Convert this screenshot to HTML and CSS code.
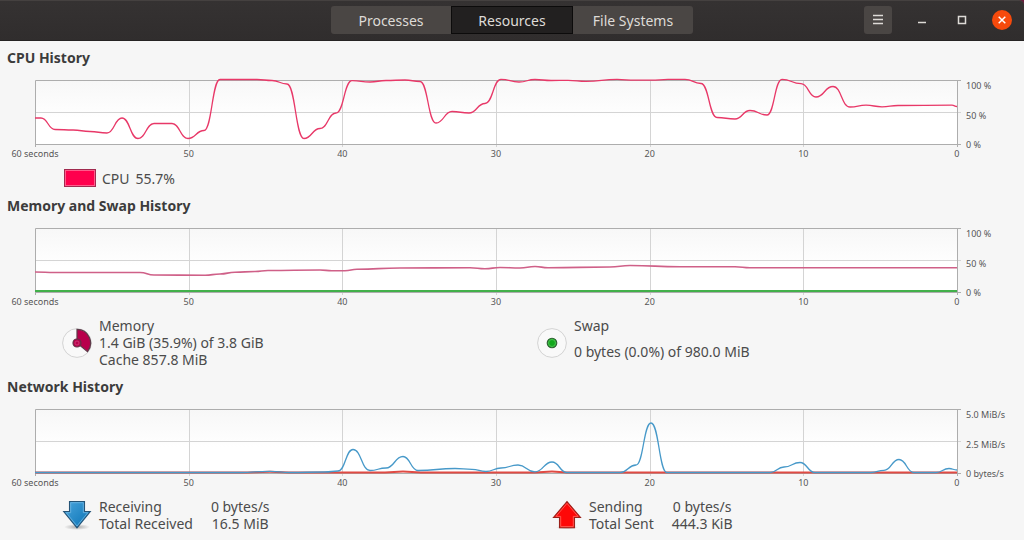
FILE: index.html
```html
<!DOCTYPE html>
<html lang="en">
<head>
<meta charset="utf-8">
<title>System Monitor</title>
<link rel="stylesheet" href="styles.css">
</head>
<body>
<div class="frame">
<header class="titlebar">
  <nav class="tabs">
    <button class="tab" type="button">Processes</button>
    <button class="tab tab-active" type="button">Resources</button>
    <button class="tab" type="button">File Systems</button>
  </nav>
  <div class="controls">
    <button class="menu" type="button" aria-label="Menu"><svg width="12" height="12" viewBox="0 0 12 12"><path d="M1 1.5h10M1 5.5h10M1 9.5h10" stroke="#dedbd7" stroke-width="1.4"/></svg></button>
    <button class="win" type="button" aria-label="Minimize"><svg width="20" height="20" viewBox="0 0 20 20"><path d="M6 12.5h8" stroke="#dedbd7" stroke-width="1.5"/></svg></button>
    <button class="win" type="button" aria-label="Maximize"><svg width="20" height="20" viewBox="0 0 20 20"><path d="M6.500 6.500h7v7h-7z" fill="none" stroke="#dedbd7" stroke-width="1.5"/></svg></button>
    <button class="win close" type="button" aria-label="Close"><svg width="20" height="20" viewBox="0 0 20 20"><path d="M6.700 6.700l6.600 6.600M13.300 6.700l-6.600 6.600" stroke="#fff" stroke-width="1.5"/></svg></button>
  </div>
</header>
</div>
<main>
  <section class="panel">
    <h2>CPU History</h2>
    <div class="chart">
      <svg class="plot" data-chart="cpu" viewBox="0 0 922 69" preserveAspectRatio="none" role="img" aria-label="CPU usage"></svg>
      <div class="scale"><span>100 %</span><span>50 %</span><span>0 %</span></div>
      <div class="times"><span>60 seconds</span><span>50</span><span>40</span><span>30</span><span>20</span><span>10</span><span>0</span></div>
    </div>
    <div class="cpu-legend">
      <button class="swatch" type="button" aria-label="CPU color"></button>
      <span>CPU</span><span>55.7%</span>
    </div>
  </section>

  <section class="panel">
    <h2>Memory and Swap History</h2>
    <div class="chart">
      <svg class="plot" data-chart="memory" viewBox="0 0 922 69" preserveAspectRatio="none" role="img" aria-label="Memory and swap usage"></svg>
      <div class="scale"><span>100 %</span><span>50 %</span><span>0 %</span></div>
      <div class="times"><span>60 seconds</span><span>50</span><span>40</span><span>30</span><span>20</span><span>10</span><span>0</span></div>
    </div>
    <div class="legend memory-legend">
      <div class="item">
        <button class="icon" type="button" aria-label="Memory color"><svg width="30" height="30" viewBox="0 0 30 30"><circle cx="15" cy="15" r="14.4" fill="#f9f9f9" stroke="#d3d3d3"/><path d="M15 15V1.4A13.6 13.6 0 0 1 25.5 23.6Z" fill="#b8004c" stroke="#5d3b49" stroke-width="1.2"/><circle cx="15" cy="15" r="4" fill="#b8004c" stroke="#633347" stroke-width="1.2"/><circle cx="15" cy="15" r="2" fill="none" stroke="#d65588" stroke-width=".6"/></svg></button>
        <div class="lines"><span>Memory</span><span>1.4 GiB (35.9%) of 3.8 GiB</span><span>Cache 857.8 MiB</span></div>
      </div>
      <div class="item">
        <button class="icon" type="button" aria-label="Swap color"><svg width="30" height="30" viewBox="0 0 30 30"><circle cx="15" cy="15" r="14.4" fill="#f9f9f9" stroke="#d3d3d3"/><circle cx="15" cy="15" r="4.8" fill="#12a81c" stroke="#315f34" stroke-width="1.1"/><circle cx="15" cy="15" r="3.5" fill="none" stroke="#59c75f" stroke-width=".8"/></svg></button>
        <div class="lines"><span>Swap</span><span class="rest">0 bytes (0.0%) of 980.0 MiB</span></div>
      </div>
    </div>
  </section>

  <section class="panel">
    <h2>Network History</h2>
    <div class="chart">
      <svg class="plot" data-chart="network" viewBox="0 0 922 69" preserveAspectRatio="none" role="img" aria-label="Network traffic"></svg>
      <div class="scale"><span>5.0 MiB/s</span><span>2.5 MiB/s</span><span>0 bytes/s</span></div>
      <div class="times"><span>60 seconds</span><span>50</span><span>40</span><span>30</span><span>20</span><span>10</span><span>0</span></div>
    </div>
    <div class="legend network-legend">
      <div class="item">
        <button class="icon" type="button" aria-label="Receiving color"><svg width="30" height="30" viewBox="0 0 30 30">
          <defs><linearGradient id="down" x1="0" y1="0" x2="1" y2="1"><stop offset="0" stop-color="#4aa5dc"/><stop offset="1" stop-color="#0871b4"/></linearGradient><radialGradient id="shade"><stop offset="0" stop-color="#777" stop-opacity=".6"/><stop offset="1" stop-color="#777" stop-opacity="0"/></radialGradient></defs>
          <ellipse cx="15" cy="27" rx="13" ry="3" fill="url(#shade)"/><path d="M7.5 1.5h15v10h5.8L15 27.8 1.7 11.5h5.8z" fill="url(#down)" stroke="#255477" stroke-width="1.1"/><path d="M8.7 2.7h12.6v10h4.5L15 26 4.2 12.7h4.5z" fill="none" stroke="#71b8e2" stroke-width=".8"/></svg></button>
        <dl><dt>Receiving</dt><dd>0 bytes/s</dd><dt>Total Received</dt><dd>16.5 MiB</dd></dl>
      </div>
      <div class="item">
        <button class="icon" type="button" aria-label="Sending color"><svg width="30" height="30" viewBox="0 0 30 30">
          <ellipse cx="15" cy="27.5" rx="11" ry="2" fill="url(#shade)"/><path d="M15 1.5L28.500 17.5h-6v10.3h-15V17.5h-6z" fill="#fe0808" stroke="#9a2019" stroke-width="1.1"/><path d="M15 3.4L26 16.4h-4.7v10.2H8.7V16.4H4z" fill="none" stroke="#ff6b62" stroke-width=".8"/></svg></button>
        <dl><dt>Sending</dt><dd>0 bytes/s</dd><dt>Total Sent</dt><dd>444.3 KiB</dd></dl>
      </div>
    </div>
  </section>
</main>
<script src="charts.js"></script>
</body>
</html>
```
FILE: styles.css
```css
* { box-sizing: border-box; }
body {
  margin: 0;
  background: #f6f6f6;
  color: #4b4b4b;
  font: 14px/17px "Noto Sans", "Open Sans", sans-serif;
}
button { margin: 0; padding: 0; border: 0; background: none; color: inherit; font: inherit; }
button svg { display: block; }

.frame { background: #6b1a3c; }
.titlebar {
  display: grid;
  grid-template-columns: 1fr auto 1fr;
  align-items: center;
  padding: 5px 12px 6px;
  border-top: 1px solid #454140;
  border-bottom: 1px solid #262424;
  border-top-right-radius: 5px;
  background: linear-gradient(#353232, #302d2d);
}
.tabs { grid-column: 2; display: flex; }
.tab {
  width: 120px;
  height: 28px;
  background: #4a4644;
  color: #dedbd7;
}
.tab:first-child { border-radius: 3px 0 0 3px; }
.tab:last-child { border-radius: 0 3px 3px 0; }
.tab-active { width: 122px; border: 1px solid #0c0b0b; background: #222020; }
.controls { display: flex; justify-content: flex-end; align-items: center; gap: 20px; }
.menu {
  display: grid;
  place-items: center;
  width: 28px;
  height: 28px;
  border-radius: 3px;
  background: #4a4644;
}
.close { border-radius: 50%; background: #f64a0c; }

main { padding-top: 7px; }
.panel { padding-bottom: 9px; }
.panel:last-child { padding-bottom: 0; }
h2 {
  margin: 0 7px 12px;
  color: #3c3c3c;
  font-size: 14px;
  font-weight: 700;
  line-height: 20px;
}
.chart {
  display: grid;
  grid-template-columns: 1fr 58px;
  column-gap: 9px;
  padding-left: 35px;
  color: #565656;
  font-size: 9px;
  line-height: 10px;
}
.plot { display: block; width: 100%; height: 69px; overflow: visible; }
.scale {
  display: flex;
  flex-direction: column;
  justify-content: space-between;
  margin-bottom: -2px;
  line-height: 12px;
}
.times { display: flex; justify-content: space-between; }
.times span { display: flex; justify-content: center; width: 0; white-space: nowrap; }

.grid-back { fill: url(#paper); }
.grid-line, .grid-edge, .series { fill: none; vector-effect: non-scaling-stroke; }
.grid-line { stroke: #d4d4d4; }
.grid-edge { stroke: #adadad; }
.series { stroke-width: 1.3px; }
.cpu { stroke: #e83868; }
.memory { stroke: #cf6088; stroke-width: 1.6px; }
.swap { stroke: #42b04a; stroke-width: 2px; }
.sending { stroke: #e04b44; stroke-width: 2px; }
.receiving { stroke: #4799c9; }

.cpu-legend { display: flex; align-items: center; gap: 6px; padding: 10px 0 0 64px; }
.swatch {
  width: 32px;
  height: 18px;
  border: 1px solid #a02a4f;
  background: #ff004d;
  box-shadow: inset 0 0 0 1px #ff5c8b;
}
.legend { display: grid; grid-template-columns: 1fr 1fr; padding: 10px 0 0 62px; }
.memory-legend { padding-right: 12px; }
.network-legend { column-gap: 18px; }
.item { display: flex; align-items: center; gap: 7px; }
.lines { display: flex; flex-direction: column; align-self: stretch; }
.rest { display: flex; flex: 1; align-items: center; }
dl { display: grid; grid-template-columns: auto auto; column-gap: 18px; margin: 0; }
dd { margin: 0; text-align: center; }
```
FILE: charts.js
```js
const SVG_NS = "http://www.w3.org/2000/svg";
const WIDTH = 922;
const HEIGHT = 64;

// Each series is a list of [x, y] points measured from the plot's top left corner.
const charts = {
  cpu: {
    cpu: [[0,38],[6,38],[20,49.5],[38,50],[55,51.5],[72,53],[87,38],[103,58.5],[119,43.5],[137,43.5],[153,58.5],[169,50.5],[185,-.5],[222,-.5],[237,.5],[252,4],[269,58.5],[285,48.5],[301,33],[317,.7],[335,2],[351,.5],[370,0],[385,1.5],[401,43],[417,31.5],[434,33],[450,23.5],[466,-.6],[484,2],[500,-.5],[516,.5],[533,.3],[551,1.3],[582,-.6],[600,.2],[616,.2],[633,-.6],[650,-.6],[666,3.5],[682,37.5],[700,39],[715,30.5],[732,35],[747,-.7],[766,3.7],[781,17],[798,6.5],[815,27],[831,25.2],[847,26.8],[863,25.5],[917,25.2],[922,26.5]]
  },
  memory: {
    memory: [[0,44],[20,44.5],[105,44.5],[119,47],[170,47.3],[185,46],[200,44.3],[220,43.5],[233,42.5],[285,42],[297,42.8],[310,42.8],[322,41.3],[365,40],[435,39.8],[450,40.8],[465,39.5],[485,40],[500,38.5],[513,39.8],[575,39],[595,37.5],[645,38.7],[700,38.7],[715,39.7],[922,39.7]],
    swap: [[0,63],[922,63]]
  },
  network: {
    sending: [[0,63.5],[205,63.5],[235,62.8],[260,63.5],[350,63.5],[368,62.6],[386,63.5],[500,63.5],[517,62.6],[532,63.5],[922,63.5]],
    receiving: [[0,63.5],[205,63.5],[235,62.3],[255,63.5],[290,63],[303,62],[318,40.5],[335,61.5],[351,59],[368,47.5],[383,61.5],[420,59.5],[437,60.3],[451,62.5],[466,59],[483,56],[500,62.8],[517,53],[532,63.5],[585,63.5],[601,56],[616,14],[632,63.5],[735,63.5],[749,58],[765,53.5],[780,63.5],[836,63.5],[849,61.3],[864,50.5],[879,63.5],[901,63.5],[914,59.5],[922,61]]
  }
};

function add(parent, name, attributes) {
  const node = document.createElementNS(SVG_NS, name);
  for (const key in attributes) node.setAttribute(key, attributes[key]);
  parent.appendChild(node);
  return node;
}

function curve(points) {
  let d = `M${points[0]}`;
  for (let i = 1; i < points.length; i++) {
    const [x0, y0] = points[i - 1];
    const [x1, y1] = points[i];
    const middle = (x0 + x1) / 2;
    d += `C${middle},${y0} ${middle},${y1} ${x1},${y1}`;
  }
  return d;
}

function drawGrid(svg) {
  const defs = add(svg, "defs", {});
  const paper = add(defs, "linearGradient", { id: "paper", x1: 0, y1: 0, x2: 0, y2: 1 });
  add(paper, "stop", { offset: 0, "stop-color": "#f7f7f7" });
  add(paper, "stop", { offset: 0.6, "stop-color": "#ffffff" });
  add(svg, "rect", { class: "grid-back", width: WIDTH, height: HEIGHT });
  for (let i = 1; i < 6; i++) {
    const x = Math.round((WIDTH * i) / 6) + 0.5;
    add(svg, "path", { class: "grid-line", d: `M${x} 0V67` });
  }
  add(svg, "path", { class: "grid-line", d: `M0 32.5H${WIDTH + 4}` });
  add(svg, "path", { class: "grid-edge", d: `M.5 67V.5H${WIDTH + 4}M0 64.5H${WIDTH + 4}M${WIDTH + 0.5} 0V67` });
}

document.querySelectorAll(".plot").forEach((svg) => {
  drawGrid(svg);
  const series = charts[svg.dataset.chart];
  for (const name in series) {
    add(svg, "path", { class: `series ${name}`, d: curve(series[name]) });
  }
});
```
